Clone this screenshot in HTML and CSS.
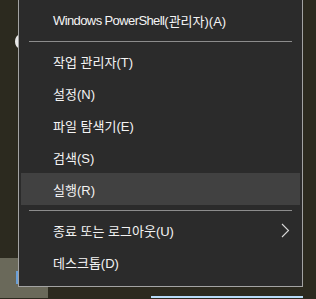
FILE: index.html
```html
<!DOCTYPE html>
<html lang="ko">
<head>
  <meta charset="UTF-8" />
  <title>Win+X 메뉴</title>
  <link rel="stylesheet" href="styles.css">
</head>
<body>
  <div class="desk">
    <div class="desk-tile"></div>
    <div class="desk-knob"></div>
    <div class="desk-blue"></div>
    <div class="desk-bar"></div>

    <div class="menu">
      <div class="item first"><span class="en">Windows PowerShell</span>(관리자)(A)</div>
      <div class="sep"></div>
      <div class="item">작업 관리자(T)</div>
      <div class="item">설정(N)</div>
      <div class="item">파일 탐색기(E)</div>
      <div class="item">검색(S)</div>
      <div class="item active">실행(R)</div>
      <div class="sep"></div>
      <div class="item sub">
        <span>종료 또는 로그아웃(U)</span>
        <svg class="chev" width="9" height="15" viewBox="0 0 9 15"><polyline points="1,1 7.5,7.5 1,14" fill="none" stroke="#d8d8d8" stroke-width="1.1"/></svg>
      </div>
      <div class="item">데스크톱(D)</div>
    </div>
  </div>
</body>
</html>
```

FILE: styles.css
```css
body {
  margin: 0;
  background-color: #2c2a1f;
  overflow: hidden;
  font-family: "Liberation Sans", "Noto Sans CJK KR", sans-serif;
}
.desk {
  position: relative;
  width: 316px;
  height: 299px;
  padding-left: 18px;
  box-sizing: border-box;
}
/* bits of the desktop behind the menu */
.desk-tile {
  position: absolute;
  left: 0;
  top: 259px;
  width: 48px;
  height: 40px;
  background-color: #6a695a;
}
.desk-knob {
  position: absolute;
  left: 15px;
  top: 36px;
  width: 8px;
  height: 13px;
  border-radius: 50%;
  background-color: #e8e8e8;
}
.desk-blue {
  position: absolute;
  left: 16px;
  top: 272px;
  width: 3px;
  height: 13px;
  background-color: #6a9fd8;
}
.desk-bar {
  position: absolute;
  left: 151px;
  top: 297px;
  width: 152px;
  height: 2px;
  background-color: #b9dcf7;
}
.menu {
  position: relative;
  width: 285px;
  height: 288px;
  margin-top: -1px;
  box-sizing: border-box;
  background-color: #2b2b2b;
  border: 1px solid #a3a3a3;
  padding: 5px 2px 0;
  color: #f4f4f4;
  font-size: 13px;
}
.item {
  height: 32px;
  display: flex;
  align-items: center;
  padding-left: 32px;
  padding-right: 10px;
}
.item.first {
  height: 31px;
}
.item.active {
  background-color: #414141;
}
.item.sub {
  justify-content: space-between;
}
.en {
  letter-spacing: -0.6px;
}
.chev {
  display: block;
}
.sep {
  height: 1px;
  margin: 5px 8px 3px;
  background-color: #8c8c8c;
}
```
